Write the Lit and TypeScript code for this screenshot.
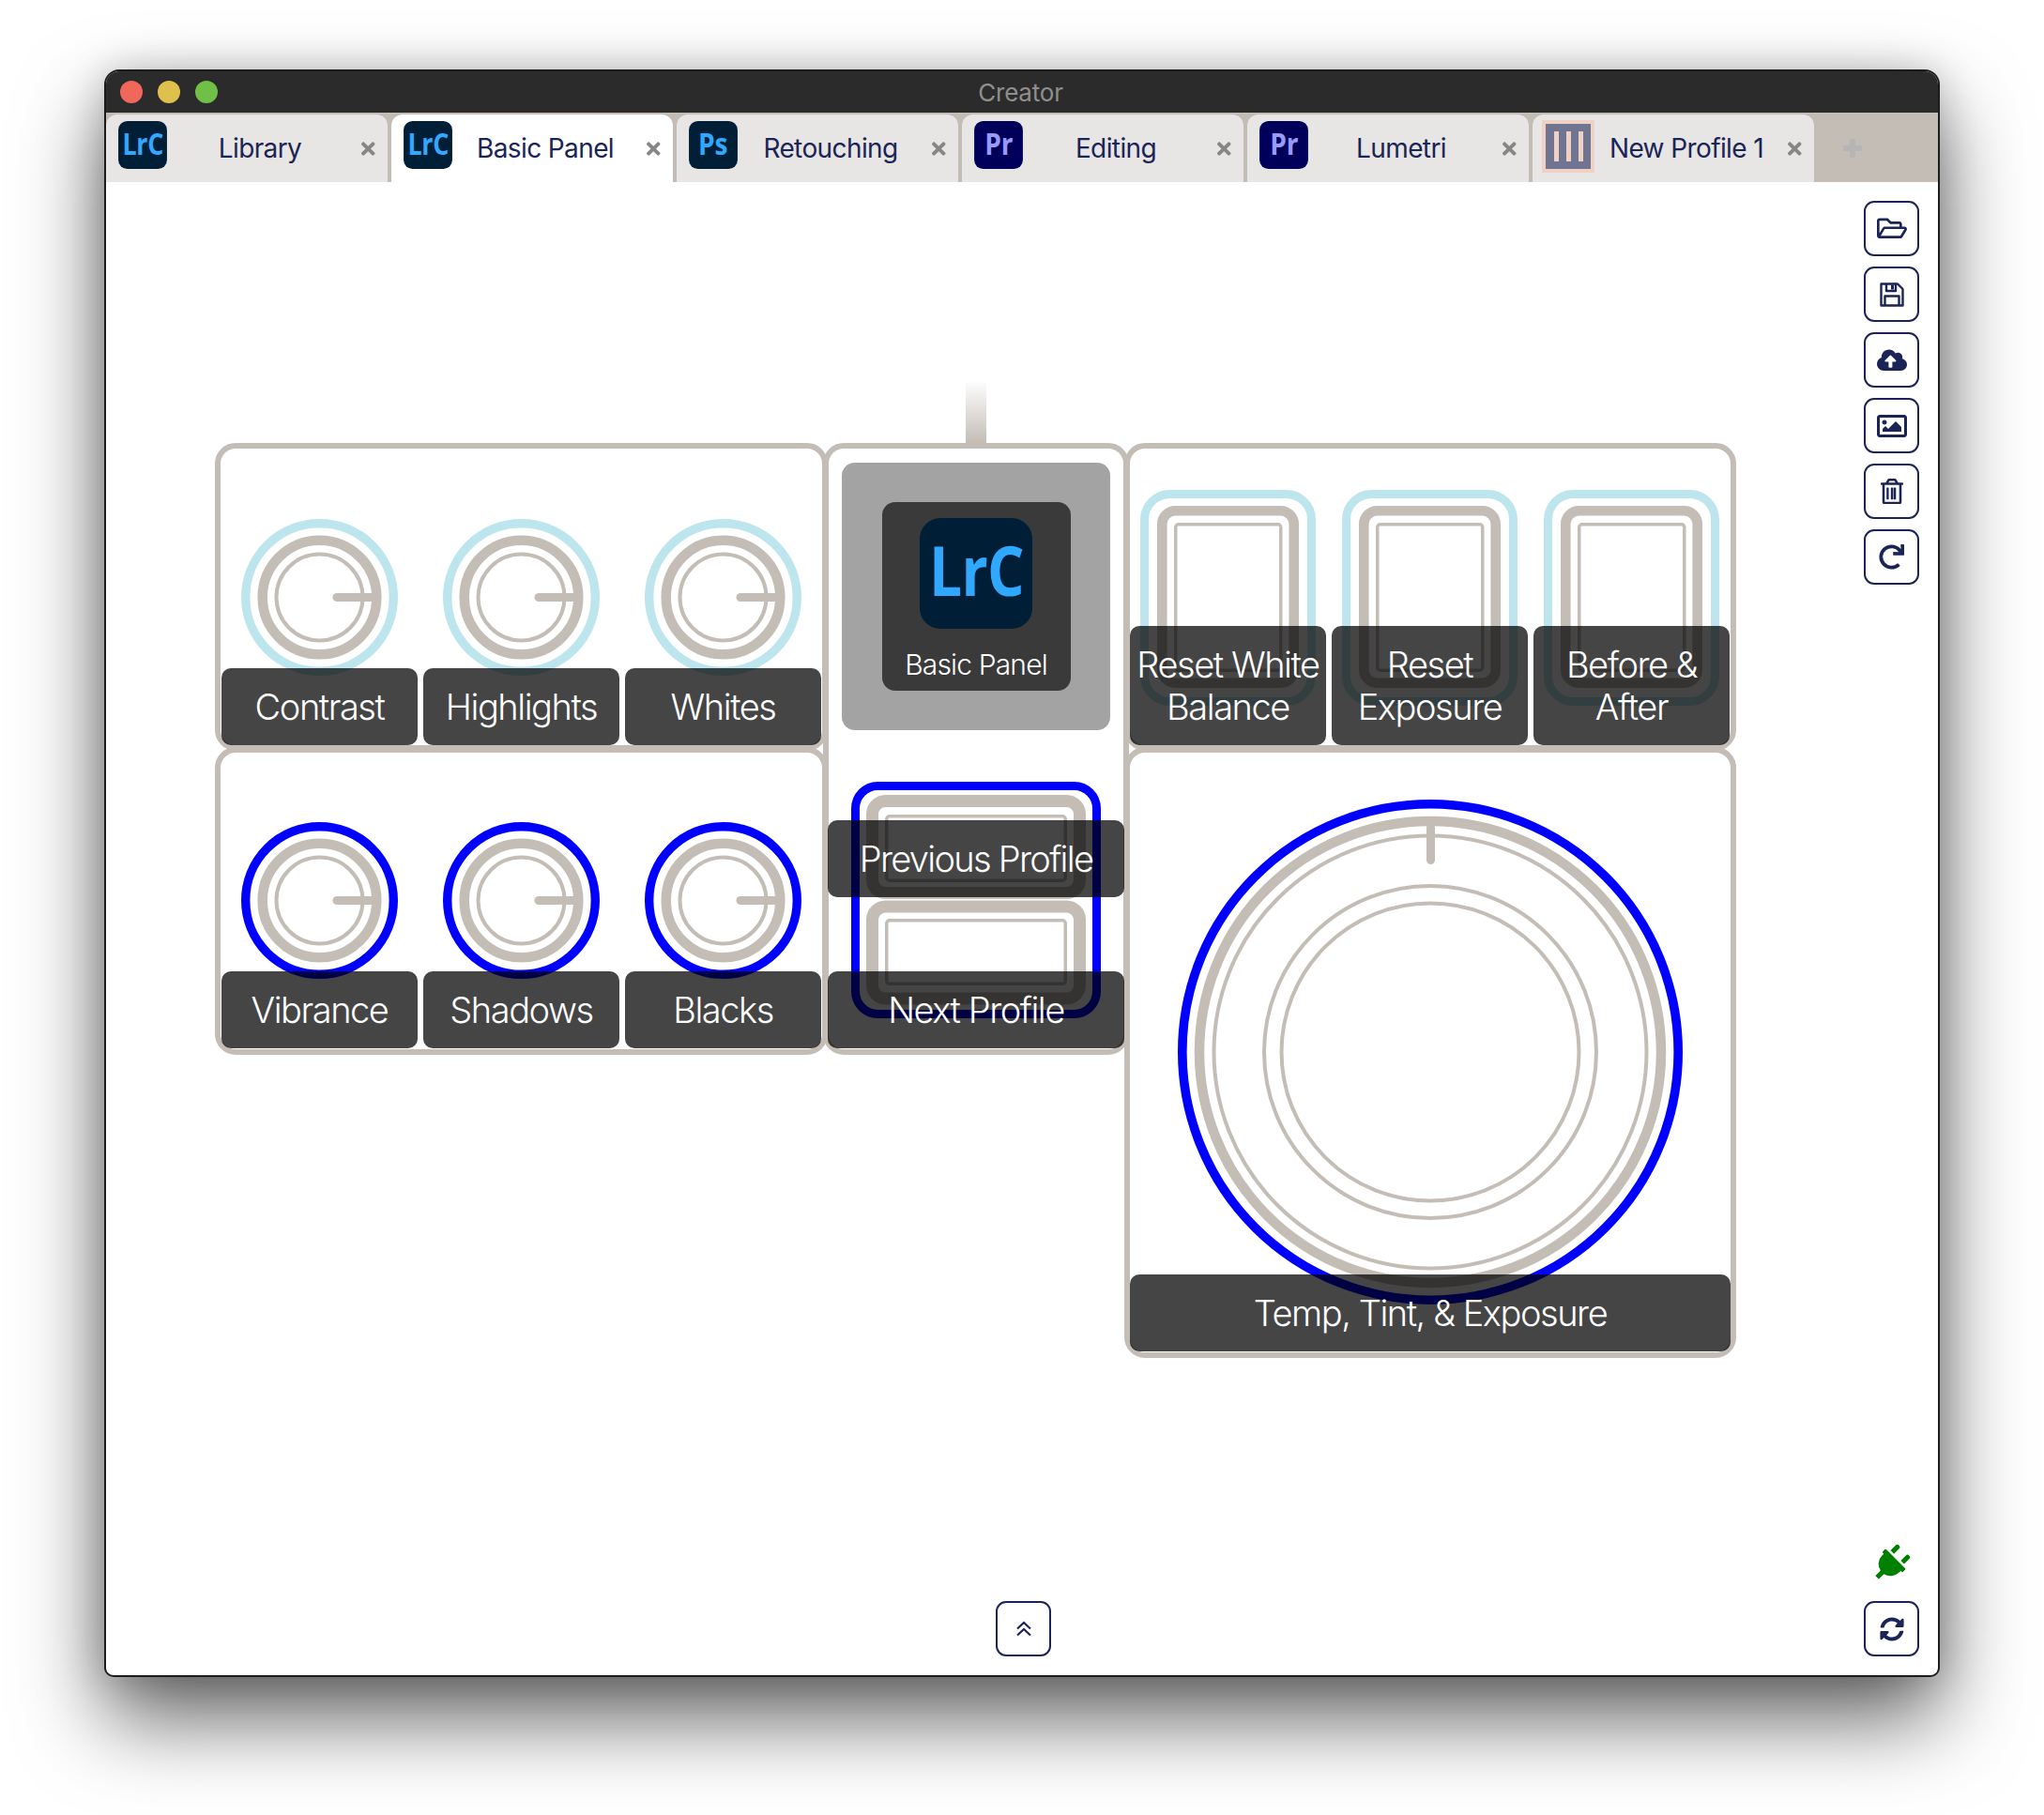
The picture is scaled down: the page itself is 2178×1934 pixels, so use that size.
import { LitElement, html, css, svg } from "lit";
import { customElement } from "lit/decorators.js";

const STONE = "#c4bdb6";
const SKY = "#bde5ee";
const BLUE = "#0000ff";

const ring = (cx: number, r: number, w: number, c: string) =>
  svg`<circle cx=${cx} cy=${cx} r=${r} fill="none" stroke=${c} stroke-width=${w}></circle>`;
const box = (x: number, y: number, w: number, h: number, rx: number, sw: number, c: string) =>
  svg`<rect x=${x} y=${y} width=${w} height=${h} rx=${rx} fill="none" stroke=${c} stroke-width=${sw}></rect>`;

const knob = (c: string) => html`<svg class="knob" viewBox="0 0 167 167">
  ${ring(83.5, 78.8, 9.4, c)}${ring(83.5, 60.8, 10.5, STONE)}${ring(83.5, 46, 4, STONE)}
  <line x1="102" y1="83.5" x2="139" y2="83.5" stroke=${STONE} stroke-width="9" stroke-linecap="round"></line>
</svg>`;

const pad = (c: string) => html`<svg class="pad" viewBox="0 0 187 230">
  ${box(4.5, 4.5, 178, 221, 27, 9, c)}${box(23.3, 22.3, 140.4, 183.4, 14, 10.6, STONE)}${box(37.75, 36.75, 112, 155.5, 3, 3.5, STONE)}
</svg>`;

const appIcon = (t: string, bg: string, fg: string, x: number, sx: number) =>
  html`<svg class="app" viewBox="0 0 120 118" aria-label=${t}>
    <rect width="120" height="118" rx="22" fill=${bg}></rect>
    <text transform="translate(${x} 83) scale(${sx} 1)" font-family="'Open Sans', sans-serif" font-weight="700" font-size="74" fill=${fg}>${t}</text>
  </svg>`;

const LRC = () => appIcon("LrC", "#001e36", "#31a8ff", 10, 0.84);
const PS = () => appIcon("Ps", "#001e36", "#31a8ff", 23, 0.88);
const PR = () => appIcon("Pr", "#00005b", "#9999ff", 26, 0.88);

const P = {
  open: ["0 0 576 512", "M527.9 224H480v-48c0-26.5-21.5-48-48-48H272l-64-64H48C21.5 64 0 85.5 0 112v288c0 26.5 21.5 48 48 48h400c16.5 0 31.9-8.5 40.7-22.6l79.9-128c20-31.9-3-73.4-40.7-73.4zM48 118c0-3.3 2.7-6 6-6h134.1l64 64H426c3.3 0 6 2.7 6 6v42H152c-16.8 0-32.4 8.8-41.1 23.2L48 351.4zm400 282H72l77.2-128H528z", 32],
  cloud: ["0 0 640 512", "M537.6 226.6c4.1-10.7 6.4-22.4 6.4-34.6 0-53-43-96-96-96-19.7 0-38.1 6-53.3 16.2C367 64.2 315.3 32 256 32c-88.4 0-160 71.6-160 160 0 2.7.1 5.4.2 8.1C40.2 219.8 0 273.2 0 336c0 79.5 64.5 144 144 144h368c70.7 0 128-57.3 128-128 0-61.9-44-113.6-102.4-125.4zM393.4 288H328v112c0 8.8-7.2 16-16 16h-48c-8.8 0-16-7.2-16-16V288h-65.4c-14.3 0-21.4-17.2-11.3-27.3l105.4-105.4c6.2-6.2 16.4-6.2 22.6 0l105.4 105.4c10.1 10.1 2.9 27.3-11.3 27.3z", 32],
  image: ["0 0 512 512", "M464 64H48C21.49 64 0 85.49 0 112v288c0 26.51 21.49 48 48 48h416c26.51 0 48-21.49 48-48V112c0-26.51-21.49-48-48-48zm-6 336H54a6 6 0 0 1-6-6V118a6 6 0 0 1 6-6h404a6 6 0 0 1 6 6v276a6 6 0 0 1-6 6zM128 152c-22.091 0-40 17.909-40 40s17.909 40 40 40 40-17.909 40-40-17.909-40-40-40zM96 352h320v-80l-87.515-87.515c-4.686-4.686-12.284-4.686-16.971 0L192 304l-39.515-39.515c-4.686-4.686-12.284-4.686-16.971 0L96 304v48z", 32],
  trash: ["0 0 448 512", "M268 416h24a12 12 0 0 0 12-12V188a12 12 0 0 0-12-12h-24a12 12 0 0 0-12 12v216a12 12 0 0 0 12 12zM432 80h-82.41l-34-56.7A48 48 0 0 0 274.41 0H173.59a48 48 0 0 0-41.16 23.3L98.41 80H16A16 16 0 0 0 0 96v16a16 16 0 0 0 16 16h16v336a48 48 0 0 0 48 48h288a48 48 0 0 0 48-48V128h16a16 16 0 0 0 16-16V96a16 16 0 0 0-16-16zM171.84 50.91A6 6 0 0 1 177 48h94a6 6 0 0 1 5.15 2.91L293.61 80H154.39zM368 464H80V128h288zm-240-48h20a12 12 0 0 0 12-12V188a12 12 0 0 0-12-12h-20a12 12 0 0 0-12 12v216a12 12 0 0 0 12 12zm86 0h20a12 12 0 0 0 12-12V188a12 12 0 0 0-12-12h-20a12 12 0 0 0-12 12v216a12 12 0 0 0 12 12z", 24],
  redo: ["0 0 512 512", "M500.33 0h-47.41a12 12 0 0 0-12 12.57l4 82.76A247.42 247.42 0 0 0 256 8C119.34 8 8.19 119.34 8.19 256 8.19 393.19 119.82 504 256 504a247.1 247.1 0 0 0 166.18-63.91 12 12 0 0 0 .48-17.43l-34-34a12 12 0 0 0-16.38-.55A176 176 0 1 1 402.1 157.8l-101.53-4.87a12 12 0 0 0-12.57 12v47.41a12 12 0 0 0 12 12h200.33a12 12 0 0 0 12-12V12a12 12 0 0 0-12-12z", 27],
  sync: ["0 0 512 512", "M370.72 133.28C339.458 104.008 298.888 87.962 255.848 88c-77.458.068-144.328 53.178-162.791 126.85-1.344 5.363-6.122 9.15-11.651 9.15H24.103c-7.498 0-13.194-6.807-11.807-14.176C33.933 94.924 134.813 8 256 8c66.448 0 126.791 26.136 171.315 68.685L463.03 40.97C478.149 25.851 504 36.559 504 57.941V192c0 13.255-10.745 24-24 24H345.941c-21.382 0-32.09-25.851-16.971-40.971l41.75-41.749zM32 296h134.059c21.382 0 32.09 25.851 16.971 40.971l-41.75 41.75c31.262 29.273 71.835 45.319 114.876 45.28 77.418-.07 144.315-53.144 162.787-126.849 1.344-5.363 6.122-9.15 11.651-9.15h57.304c7.498 0 13.194 6.807 11.807 14.176C478.067 417.076 377.187 504 256 504c-66.448 0-126.791-26.136-171.315-68.685L48.97 471.03C33.851 486.149 8 475.441 8 454.059V320c0-13.255 10.745-24 24-24z", 26],
} as Record<string, [string, string, number]>;

const faBtn = (k: string) => html`<button class="tool"><svg width=${P[k][2]} viewBox=${P[k][0]} fill="#1a2456"><path d=${P[k][1]}></path></svg></button>`;

const floppy = html`<button class="tool"><svg width="26" height="26" viewBox="0 0 26 26" fill="none" stroke="#1a2456" stroke-width="2.4" stroke-linejoin="round">
  <path d="M1.5 1.5H19L24.5 7V24.5H1.5Z"></path>
  <path d="M7 1.5V9H17V1.5"></path>
  <path d="M13.5 2.5V7.5" stroke-width="3"></path>
  <path d="M5.5 24.5V14.5H20.5V24.5"></path>
</svg></button>`;

const chevrons = html`<button class="tool"><svg width="18" height="17" viewBox="0 0 18 17" fill="none" stroke="#1a2456" stroke-width="2.2" stroke-linejoin="miter">
  <path d="M2 8.5 9 2 16 8.5"></path><path d="M2 15.5 9 9 16 15.5"></path></svg></button>`;

const closeX = html`<svg class="x" viewBox="0 0 352 512"><path fill="#868686" d="M242.72 256l100.07-100.07c12.28-12.28 12.28-32.19 0-44.48l-22.24-22.24c-12.28-12.28-32.19-12.28-44.48 0L176 189.28 75.93 89.21c-12.28-12.28-32.19-12.28-44.48 0L9.21 111.45c-12.28 12.28-12.28 32.19 0 44.48L109.28 256 9.21 356.07c-12.28 12.28-12.28 32.19 0 44.48l22.24 22.24c12.28 12.28 32.2 12.28 44.48 0L176 322.72l100.07 100.07c12.28 12.28 32.2 12.28 44.48 0l22.24-22.24c12.28-12.28 12.28-32.19 0-44.48L242.72 256z"></path></svg>`;

const TABS = [
  { t: "Library", i: LRC },
  { t: "Basic Panel", i: LRC, on: true },
  { t: "Retouching", i: PS },
  { t: "Editing", i: PR },
  { t: "Lumetri", i: PR },
];

@customElement("app-root")
export class AppRoot extends LitElement {
  static styles = css`
    :host { display: block; width: 2178px; height: 1934px; background: #fff; padding: 74px 0 0 111px; box-sizing: border-box; overflow: hidden;
      font-family: Inter, "Liberation Sans", sans-serif; }
    .win { width: 1956px; height: 1713px; box-sizing: border-box; border: 2px solid #1c1c1c; border-radius: 16px 16px 10px 10px; overflow: hidden; background: #fff;
      box-shadow: 0 44px 90px rgba(0,0,0,.62), 0 0 40px rgba(0,0,0,.18); display: flex; flex-direction: column; }
    .title { height: 44px; background: #2b2b2b; display: flex; align-items: center; position: relative; justify-content: center; color: #8f8f8f; font-size: 26px; letter-spacing: -.2px; padding-right: 3px; }
    .lights { position: absolute; left: 15px; top: 10px; display: flex; gap: 16px; }
    .lights i { width: 24px; height: 24px; border-radius: 50%; display: block; }
    .red { background: #f0685c; }
    .yellow { background: #e0c04c; }
    .green { background: #70c048; }
    .tabs { height: 74px; box-sizing: border-box; background: #c4bdb6; padding-top: 2px; display: flex; gap: 4px; }
    .tab { width: 300px; height: 72px; background: #e8e6e4; border-radius: 12px 12px 0 0; display: flex; align-items: center; color: #1a2456; font-size: 28px; letter-spacing: -.6px; padding-left: 13px; box-sizing: border-box; }
    .tab.on { background: #fff; }
    .tab .app { width: 52px; height: 51px; align-self: flex-start; margin-top: 7px; flex: none; }
    .tab .txt { width: 198px; text-align: center; white-space: nowrap; flex: none; }
    .x { width: 14.5px; height: 21px; margin-left: 9px; flex: none; }
    .prof { width: 56px; height: 56px; box-sizing: border-box; margin: 6px -1px 0 -3px; align-self: flex-start; background: #6f7591; border: 4px solid #eed1c4; display: flex; justify-content: center; align-items: center; gap: 8px; flex: none; }
    .prof i { display: block; width: 5px; height: 32px; background: #eed1c4; }
    .plus { width: 22px; height: 22px; margin: 25px 0 0 26px; flex: none; }
    .plus svg { display: block; width: 22px; height: 22px; }
    .body { flex: 1; display: flex; min-height: 0; }
    .canvas { width: 1873px; box-sizing: border-box; padding: 278px 0 20px 116px; display: flex; flex-direction: column; justify-content: space-between; align-items: flex-start; }
    .canvas > .tool { margin-left: 832px; }
    .rail { width: 59px; padding-top: 20px; padding-bottom: 20px; display: flex; flex-direction: column; gap: 11px; box-sizing: border-box; }
    .plug { margin-top: auto; margin-bottom: 8px; display: flex; justify-content: center; padding-right: 3px; }
    .plug svg { width: 31px; height: 41px; transform: rotate(45deg); display: block; }
    .tool { width: 59px; height: 59px; flex: none; box-sizing: border-box; padding: 0; border: 2.4px solid #1a2456; border-radius: 11px; background: #fff; display: flex; align-items: center; justify-content: center; }
    .tool svg { display: block; }
    .grid { display: grid; grid-template-columns: 648px 321px 652px; grid-template-rows: 324px 324px 328px; }
    .panel { box-sizing: border-box; border: 6px solid #c4bdb6; border-radius: 22px; position: relative; height: 328px; min-width: 0; }
    .row { display: flex; gap: 6px; align-items: flex-end; padding: 0 0 0 1px; margin-right: -5px; }
    .row.b { grid-column: 1; grid-row: 2; padding-bottom: 1px; }
    .row.a { grid-column: 1; grid-row: 1; }
    .row.c { grid-column: 3; grid-row: 1; padding-left: 0; margin-right: 0; }
    .cell { width: 209px; flex: none; display: flex; flex-direction: column; align-items: center; }
    .knob { width: 167px; height: 167px; display: block; margin-bottom: -8px; }
    .pad { width: 187px; height: 230px; display: block; margin-bottom: -85px; }
    .label { width: 100%; height: 82px; box-sizing: border-box; background: rgba(0,0,0,.73); color: #fff; border-radius: 10px; display: flex; align-items: center; justify-content: center; text-align: center;
      font-size: 38px; font-weight: 350; letter-spacing: -1.45px; line-height: 45px; position: relative; white-space: nowrap; }
    .label.two { height: 127px; }
    .center { grid-column: 2; grid-row: 1 / span 3; height: 652px; margin-right: -5px; display: flex; flex-direction: column; align-items: center; padding-top: 15px; }
    .stub { position: absolute; left: 146px; top: -73px; width: 22px; height: 67px; background: linear-gradient(#fff, #c4bdb6); }
    .tile { width: 286px; height: 285px; flex: none; background: #a3a3a3; border-radius: 14px; display: flex; align-items: center; justify-content: center; }
    .bank { width: 201px; height: 201px; background: #3a3a3a; border-radius: 14px; display: flex; flex-direction: column; align-items: center; padding-top: 17px; box-sizing: border-box; color: #fff; font-size: 30px; font-weight: 350; letter-spacing: -.85px; }
    .bank .app { width: 120px; height: 118px; display: block; margin-bottom: 18px; }
    .bank span { line-height: 40px; }
    .pair { width: 266px; height: 252px; margin-top: 55px; position: relative; flex: none; }
    .pair svg { display: block; width: 266px; height: 252px; }
    .pair .label { position: absolute; left: -25px; width: 316px; }
    .pair .l1 { top: 41px; letter-spacing: -1.7px; }
    .pair .l2 { top: 202px; }
    .dialp { grid-column: 3; grid-row: 2 / span 2; height: 651px; display: flex; flex-direction: column; align-items: center; padding-top: 50px; }
    .dial { width: 538px; height: 538px; display: block; margin-bottom: -32px; flex: none; }
    .dialp .label { width: 640px; flex: none; }
  `;

  render() {
    return html`<div class="win">
      <div class="title">
        <div class="lights"><i class="red"></i><i class="yellow"></i><i class="green"></i></div>
        Creator
      </div>
      <div class="tabs">
        ${TABS.map((t) => html`<div class="tab ${t.on ? "on" : ""}">${t.i()}<span class="txt">${t.t}</span>${closeX}</div>`)}
        <div class="tab"><div class="prof"><i></i><i></i><i></i></div><span class="txt">New Profile 1</span>${closeX}</div>
        <div class="plus"><svg viewBox="0 0 22 22"><path fill="#b5b5b5" d="M8 2a2 2 0 0 1 2-1h2a2 2 0 0 1 2 1v6h6a2 2 0 0 1 1 2v2a2 2 0 0 1-1 2h-6v6a2 2 0 0 1-2 1h-2a2 2 0 0 1-2-1v-6H2a2 2 0 0 1-1-2v-2a2 2 0 0 1 1-2h6z"></path></svg></div>
      </div>
      <div class="body">
        <div class="canvas">
          <div class="grid">
            <div class="panel row a">
              ${["Contrast", "Highlights", "Whites"].map((t) => html`<div class="cell">${knob(SKY)}<div class="label">${t}</div></div>`)}
            </div>
            <div class="panel center">
              <div class="stub"></div>
              <div class="tile"><div class="bank">${LRC()}<span>Basic Panel</span></div></div>
              <div class="pair">
                <svg viewBox="0 0 266 252">
                  ${box(4.5, 4.5, 257, 243, 24, 9, BLUE)}
                  ${box(22.5, 20.5, 221, 98, 14, 13, STONE)}${box(22.5, 133, 221, 98, 14, 13, STONE)}
                  ${box(37.75, 36.75, 190.5, 68.5, 3, 3.5, STONE)}${box(37.75, 147.75, 190.5, 67.5, 3, 3.5, STONE)}
                </svg>
                <div class="label l1">Previous Profile</div>
                <div class="label l2">Next Profile</div>
              </div>
            </div>
            <div class="panel row c">
              ${[["Reset White", "Balance"], ["Reset", "Exposure"], ["Before &", "After"]].map(([a, b]) =>
                html`<div class="cell">${pad(SKY)}<div class="label two">${a}<br />${b}</div></div>`)}
            </div>
            <div class="panel row b">
              ${["Vibrance", "Shadows", "Blacks"].map((t) => html`<div class="cell">${knob(BLUE)}<div class="label">${t}</div></div>`)}
            </div>
            <div class="panel dialp">
              <svg class="dial" viewBox="0 0 538 538">
                ${ring(269, 264.2, 9.6, BLUE)}${ring(269, 246, 10.5, STONE)}${ring(269, 230.5, 4, STONE)}${ring(269, 177, 4, STONE)}${ring(269, 158.5, 4, STONE)}
                <line x1="269.5" y1="30" x2="269.5" y2="64.5" stroke=${STONE} stroke-width="9" stroke-linecap="round"></line>
              </svg>
              <div class="label">Temp, Tint, &amp; Exposure</div>
            </div>
          </div>
          ${chevrons}
        </div>
        <div class="rail">
          ${faBtn("open")}${floppy}${faBtn("cloud")}${faBtn("image")}${faBtn("trash")}${faBtn("redo")}
          <div class="plug"><svg viewBox="0 0 384 512"><path fill="#008000" d="M320,32a32,32,0,0,0-64,0v96h64Zm48,128H16A16,16,0,0,0,0,176v32a16,16,0,0,0,16,16H32v32A160.07,160.07,0,0,0,160,412.8V512H224V412.8A160.07,160.07,0,0,0,352,256V224h16a16,16,0,0,0,16-16V176A16,16,0,0,0,368,160ZM128,32a32,32,0,0,0-64,0v96h64Z"></path></svg></div>
          ${faBtn("sync")}
        </div>
      </div>
    </div>`;
  }
}
